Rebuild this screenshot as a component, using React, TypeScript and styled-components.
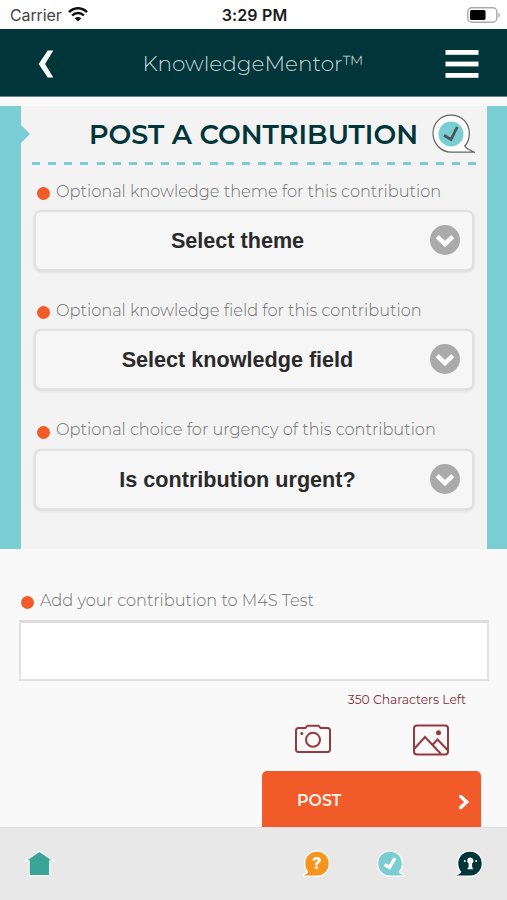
import React from 'react';
import styled, { createGlobalStyle } from 'styled-components';

const GlobalStyle = createGlobalStyle`
  *, *::before, *::after { box-sizing: border-box; }
  body { margin: 0; background: #f9f9f9; }
  button { font: inherit; border: 0; padding: 0; background: none; cursor: pointer; }
  svg { display: block; flex: none; }
`;

const brand = '"Montserrat", Inter, sans-serif';
const system = '"Liberation Sans", Arial, sans-serif';

const Screen = styled.div`
  display: flex;
  flex-direction: column;
  width: 507px;
  height: 900px;
  overflow: hidden;
  background: #f9f9f9;
  font-family: ${brand};
`;

const StatusBar = styled.div`
  display: grid;
  grid-template-columns: 1fr auto 1fr;
  align-items: center;
  flex: none;
  height: 29px;
  padding: 0 8px 0 10px;
  background: #fff;
  font: 500 16px/28px Inter, sans-serif;
  color: #1c1c1c;
`;

const Carrier = styled.div`
  display: flex;
  align-items: center;
  gap: 6px;
  font-weight: 400;
  color: #444;
  letter-spacing: -0.12px;
`;

const Clock = styled.span`
  font-weight: 600;
  letter-spacing: 0.15px;
`;

const BatterySlot = styled.div`
  display: flex;
  justify-content: flex-end;
  margin-right: -2px;
`;

const Header = styled.header`
  display: flex;
  align-items: center;
  justify-content: space-between;
  flex: none;
  height: 68px;
  padding: 3px 28px 0 38px;
  background: #003539;
  border-bottom: 1px solid #6d8486;
`;

const Brand = styled.h1`
  margin: 0 0 3px 8px;
  font: 300 21.6px/28px ${brand};
  white-space: nowrap;
  color: #c9d5d8;
`;

const Panel = styled.section`
  flex: none;
  height: 443px;
  margin-top: 9px;
  padding: 0 13px 0 14px;
  border: solid #79cdd3;
  border-width: 0 20px 0 21px;
  background: #f3f3f3;
`;

const TitleRow = styled.div`
  display: flex;
  align-items: center;
  height: 56px;
  margin: 0 -3px 0 -14px;
`;

const Notch = styled.div`
  width: 9px;
  height: 18px;
  background: #79cdd3;
  clip-path: polygon(0 0, 100% 50%, 0 100%);
`;

const Title = styled.h2`
  flex: none;
  width: 330px;
  margin: 2px 13px 0 59px;
  font: 600 27px/30px ${brand};
  white-space: nowrap;
  color: #003539;
`;

const Dashes = styled.div`
  height: 3px;
  margin: 0 -3px 0 -3px;
  background: repeating-linear-gradient(90deg, #79cdd3 0 8px, transparent 8px 16.15px);
`;

const Field = styled.div`
  height: 119.4px;
  padding-top: 12px;
`;

const Label = styled.div`
  display: flex;
  align-items: center;
  gap: 6px;
  height: 28px;
  padding: 0 0 1px 2px;
  font: 300 16.22px/26px ${brand};
  font-variant-ligatures: none;
  white-space: nowrap;
  color: #707070;
`;

const Dot = styled.i`
  flex: none;
  width: 13px;
  height: 13px;
  margin-top: 6px;
  border-radius: 50%;
  background: #f15a29;
`;

const Select = styled.button`
  display: flex;
  align-items: center;
  width: 440px;
  height: 61px;
  margin: 5px -1px 0;
  padding: 0 12px 1px 28px;
  border: 2px solid #e0e0e0;
  border-radius: 7px;
  background: #f6f6f6;
  box-shadow: 0 1px 3px rgba(0, 0, 0, 0.12);
  color: #2a2a2a;
`;

const SelectText = styled.span`
  flex: 1;
  padding: 2px 19px 0 0;
  font: 700 21.6px/28px ${system};
  text-align: center;
  font-variant-ligatures: none;
`;

const Composer = styled.section`
  display: flex;
  flex-direction: column;
  flex: 1;
  padding: 37px 18px 0 19px;
`;

const TextInput = styled.textarea`
  width: 470px;
  height: 61px;
  margin: 6px 0 0;
  padding: 10px;
  border: 2px solid #e2e2e2;
  border-top: 3px solid #dcdcdc;
  border-radius: 0;
  background: #fff;
  font: 300 16px ${brand};
  resize: none;
  outline: none;
`;

const Counter = styled.div`
  margin: 9px 23px 0 0;
  font: 400 12.3px/20px ${brand};
  text-align: right;
  color: #84303a;
`;

const Attachments = styled.div`
  display: flex;
  justify-content: flex-end;
  gap: 82px;
  height: 32px;
  margin: 14px 40px 0 0;
`;

const PostButton = styled.button`
  display: flex;
  align-items: center;
  justify-content: space-between;
  align-self: flex-end;
  width: 219px;
  height: 56px;
  margin: 15px 8px 0 0;
  padding: 6px 11px 0 35px;
  border-radius: 5px 5px 0 0;
  background: #f15a29;
  font: 600 15.9px/20px ${brand};
  color: #fff4ec;
`;

const PostText = styled.span`
  margin-bottom: 2px;
`;

const TabBar = styled.nav`
  display: flex;
  align-items: flex-start;
  justify-content: space-between;
  flex: none;
  height: 73px;
  padding: 22px 21px 0 24px;
  background: #e8e8e8;
  border-top: 1px solid #dedede;
`;

const TabGroup = styled.div`
  display: grid;
  grid-template-columns: 34px 34px 34px;
  column-gap: 42.5px;
`;

const WifiIcon = () => (
  <svg width="20" height="15" viewBox="0 0 20 15" fill="none" stroke="#111" strokeWidth="2.5">
    <path d="M1 5.2C6-.1 14-.1 19 5.2" />
    <path d="M4.1 8.5C7.4 5.1 12.6 5.1 15.9 8.5" />
    <path d="M10 14.6 6.7 11.3C8.5 9.6 11.5 9.6 13.3 11.3Z" fill="#111" stroke="none" />
  </svg>
);

const BatteryIcon = () => (
  <svg width="34" height="16" viewBox="0 0 34 16">
    <rect x=".8" y=".8" width="29" height="14.4" rx="4" fill="#fff" stroke="#aaa" strokeWidth="1.4" />
    <rect x="3" y="3" width="15.5" height="10" rx="1.6" fill="#000" />
    <path d="M31.3 5.4c2 .8 2 4.4 0 5.2Z" fill="#aaa" />
  </svg>
);

const BackIcon = () => (
  <svg width="16" height="28" viewBox="0 0 16 28">
    <path d="M9.7.5H15.3L7.1 14 15.3 27.5H9.7L.7 14Z" fill="#fff" />
  </svg>
);

const MenuIcon = () => (
  <svg width="34" height="28" viewBox="0 0 34 28" fill="#fff">
    <rect x=".5" y="0" width="33" height="4.8" />
    <rect x=".5" y="11.6" width="33" height="4.8" />
    <rect x=".5" y="23" width="33" height="4.8" />
  </svg>
);

const ContributionIcon = () => (
  <svg width="44" height="40" viewBox="0 0 44 40">
    <path
      d="M19 1.2C8.8 1.2 1 9 1 19.2S8.8 38.2 19.5 38.2H42.5C38 36.3 34 34.5 32.7 32C36 28.8 37.3 24.5 37.3 19.5C37.3 9 29.5 1.2 19 1.2Z"
      fill="#fff"
      stroke="#626262"
      strokeWidth="1.2"
      strokeLinejoin="round"
    />
    <circle cx="19" cy="20" r="12.5" fill="#79cdd3" />
    <path d="m12 21.2 7 4.3 6.2-12.5" fill="none" stroke="#4b5355" strokeWidth="2.8" />
  </svg>
);

const ChevronDisc = () => (
  <svg width="30" height="30" viewBox="0 0 30 30">
    <circle cx="15" cy="15" r="15" fill="#aaa" />
    <path d="m7.3 11.7 7.7 7.5 7.7-7.5" fill="none" stroke="#fff" strokeWidth="4.5" />
  </svg>
);

const CameraIcon = () => (
  <svg width="36" height="32" viewBox="0 0 36 32" fill="none" stroke="#943b3d" strokeWidth="2">
    <path d="M3.5 4H10.5L12.5 1.7H23.5L25.5 4H32.5Q35 4 35 6.5V25.5Q35 28 32.5 28H3.5Q1 28 1 25.5V6.5Q1 4 3.5 4Z" />
    <circle cx="18" cy="15.8" r="7" />
    <circle cx="6.8" cy="9.5" r="1.5" fill="#943b3d" stroke="none" />
  </svg>
);

const PictureIcon = () => (
  <svg width="36" height="32" viewBox="0 0 36 32" fill="none" stroke="#943b3d" strokeWidth="2">
    <rect x="1" y="1.5" width="34" height="29" rx="3" />
    <path d="M1.5 24.5 12 13 28 30" />
    <path d="M19.5 21 24.5 15.5 34.5 26" />
    <circle cx="25.5" cy="8.8" r="2.5" fill="#943b3d" stroke="none" />
  </svg>
);

const NextIcon = () => (
  <svg width="12" height="16" viewBox="0 0 12 16">
    <path d="m2.7 2.5 6 5.5-6 5.5" fill="none" stroke="#fff" strokeWidth="3.5" strokeLinecap="round" />
  </svg>
);

const HomeIcon = () => (
  <svg width="32" height="28" viewBox="0 0 32 28">
    <path
      d="M15.4 2 27.5 10.3H25V25H5.8V10.3H3.3Z"
      fill="#3aa597"
      stroke="#f3fbfa"
      strokeWidth="2.5"
      paintOrder="stroke"
    />
  </svg>
);

const Bubble = ({ color, flip, children }: { color: string; flip?: boolean; children: React.ReactNode }) => (
  <svg width="34" height="28" viewBox="0 0 34 28">
    <g transform={flip ? 'translate(32 0) scale(-1 1)' : undefined}>
      <path
        d="M18 1.8C24.7 1.8 29.7 6.7 29.7 13.5S24.7 25.6 18 25.6H4C7.5 24.3 9.2 23.2 9.3 21.7C7.4 19.7 6.3 16.8 6.3 13.5C6.3 6.7 11.3 1.8 18 1.8Z"
        fill={color}
        stroke="#fbfbfb"
        strokeWidth="2.8"
        paintOrder="stroke"
      />
    </g>
    {children}
  </svg>
);

const QuestionMark = styled.text`
  font: 800 16px Inter, sans-serif;
  fill: #fff;
  text-anchor: middle;
`;

const fields = [
  { label: 'Optional knowledge theme for this contribution', value: 'Select theme' },
  { label: 'Optional knowledge field for this contribution', value: 'Select knowledge field' },
  { label: 'Optional choice for urgency of this contribution', value: 'Is contribution urgent?' },
];

export default function App() {
  return (
    <Screen>
      <GlobalStyle />
      <StatusBar>
        <Carrier>
          Carrier
          <WifiIcon />
        </Carrier>
        <Clock>3:29 PM</Clock>
        <BatterySlot>
          <BatteryIcon />
        </BatterySlot>
      </StatusBar>
      <Header>
        <button aria-label="Back"><BackIcon /></button>
        <Brand>KnowledgeMentor™</Brand>
        <button aria-label="Menu"><MenuIcon /></button>
      </Header>
      <Panel>
        <TitleRow>
          <Notch />
          <Title>POST A CONTRIBUTION</Title>
          <ContributionIcon />
        </TitleRow>
        <Dashes />
        {fields.map((f) => (
          <Field key={f.label}>
            <Label>
              <Dot />
              {f.label}
            </Label>
            <Select>
              <SelectText>{f.value}</SelectText>
              <ChevronDisc />
            </Select>
          </Field>
        ))}
      </Panel>
      <Composer>
        <Label>
          <Dot />
          Add your contribution to M4S Test
        </Label>
        <TextInput aria-label="Contribution" />
        <Counter>350 Characters Left</Counter>
        <Attachments>
          <CameraIcon />
          <PictureIcon />
        </Attachments>
        <PostButton>
          <PostText>POST</PostText>
          <NextIcon />
        </PostButton>
      </Composer>
      <TabBar>
        <HomeIcon />
        <TabGroup>
          <Bubble color="#f7941e">
            <QuestionMark x="18" y="19.2">?</QuestionMark>
          </Bubble>
          <Bubble color="#79cdd3" flip>
            <path d="m8.5 14.5 5 3 5.500-9.500" fill="none" stroke="#fff" strokeWidth="3.4" />
          </Bubble>
          <Bubble color="#003539">
            <path d="M18.4 7.5a3.3 3.3 0 0 1 1.7 6v4.3h1v1.5h-5.5v-1.5h1v-4.3a3.3 3.3 0 0 1 1.8-6Z" fill="#fff" />
            <circle cx="12.8" cy="11" r="1" fill="#fff" />
            <circle cx="24.2" cy="11" r="1" fill="#fff" />
          </Bubble>
        </TabGroup>
      </TabBar>
    </Screen>
  );
}
